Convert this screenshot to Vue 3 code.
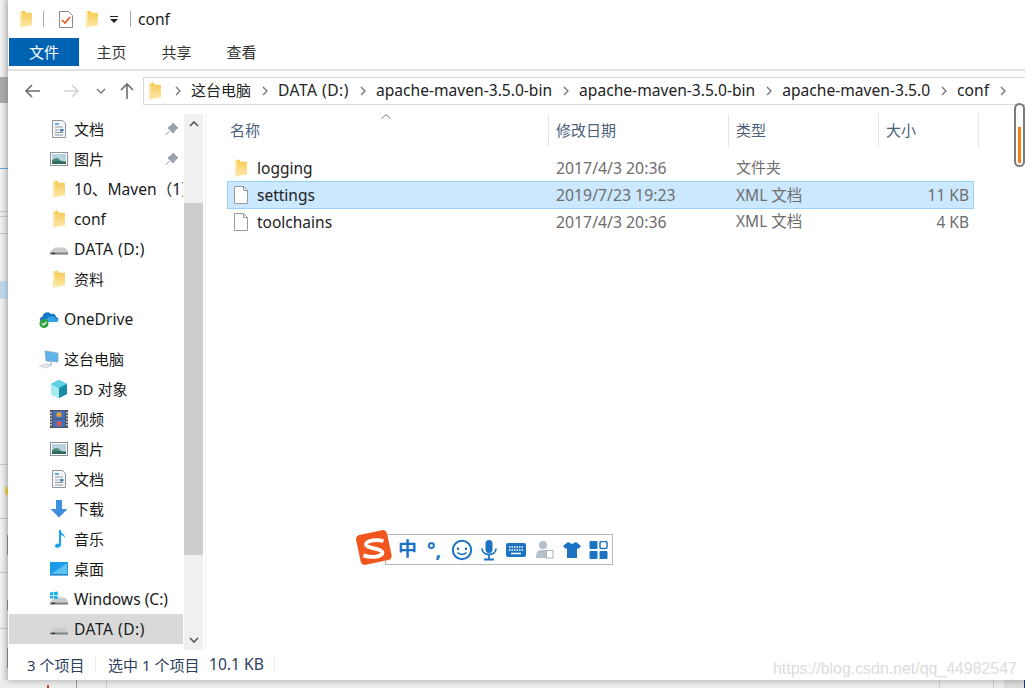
<template>
  <div class="stage">
    <div class="edge">
      <i class="mark dark" style="top:77px;height:26px"></i>
      <i class="mark blue" style="top:168px"></i>
      <i class="mark line" style="top:211px"></i>
      <i class="mark line" style="top:216px"></i>
      <i class="mark line" style="top:233px"></i>
      <i class="mark sel" style="top:281px;height:18px"></i>
      <i class="mark line" style="top:464px"></i>
      <i class="mark line" style="top:518px"></i>
      <i class="mark line" style="top:572px"></i>
      <i class="mark line" style="top:628px"></i>
      <i class="mark yellow" style="top:487px;height:8px"></i>
      <i class="mark stub" style="top:535px;height:20px"></i>
      <i class="mark stub" style="top:600px;height:10px"></i>
      <i class="mark stub" style="top:648px;height:20px"></i>
    </div>
    <div class="window">
      <div class="titlebar">
        <svg class="folder-s" viewBox="0 0 14 18"><use href="#folder" /></svg>
        <i class="tsep"></i>
        <svg class="check" width="16" height="19" viewBox="0 0 16 19">
          <path d="M1.5 1.5h9l4 4v12h-13z" fill="#fff" stroke="#8a8a8a" />
          <path d="M4 10l3 3 5-6" fill="none" stroke="#e8541e" stroke-width="1.6" />
        </svg>
        <svg class="folder-s" viewBox="0 0 14 18"><use href="#folder" /></svg>
        <svg class="drop" width="8" height="7" viewBox="0 0 8 7">
          <path d="M0 0h8v1H0zM0 3h8L4 7z" fill="#222" />
        </svg>
        <i class="tsep second"></i>
        <span class="title">conf</span>
      </div>
      <div class="tabs">
        <span class="tab file">文件</span>
        <span class="tab" v-for="t in tabs" :key="t">{{ t }}</span>
      </div>
      <div class="addrrow">
        <svg class="nav-arrow" width="18" height="16" viewBox="0 0 18 16"><path d="M16 8H2M8 2L2 8l6 6" fill="none" stroke="#6d6d6d" stroke-width="1.6" /></svg>
        <svg class="nav-arrow fwd" width="18" height="16" viewBox="0 0 18 16"><path d="M2 8h14M10 2l6 6-6 6" fill="none" stroke="#d4d4d4" stroke-width="1.6" /></svg>
        <svg class="nav-down" width="10" height="6" viewBox="0 0 10 6"><path d="M1 1l4 4 4-4" fill="none" stroke="#777" stroke-width="1.4" /></svg>
        <svg class="nav-up" width="16" height="18" viewBox="0 0 16 18"><path d="M8 17V2M2 8l6-6 6 6" fill="none" stroke="#6d6d6d" stroke-width="1.6" /></svg>
        <div class="address">
          <svg class="folder-s addr-folder" viewBox="0 0 14 18"><use href="#folder" /></svg>
          <template v-for="c in crumbs" :key="c.id">
            <svg class="chev" width="6" height="10" viewBox="0 0 6 10"><path d="M1 1l4 4-4 4" fill="none" stroke="#777" stroke-width="1.4" /></svg>
            <span class="crumb" :class="c.cls">{{ c.label }}</span>
          </template>
          <svg class="chev" width="6" height="10" viewBox="0 0 6 10"><path d="M1 1l4 4-4 4" fill="none" stroke="#777" stroke-width="1.4" /></svg>
        </div>
      </div>
      <div class="body">
        <div class="nav">
          <div class="navlist">
            <div
              v-for="n in navItems"
              :key="n.label + n.icon + n.top"
              class="navitem"
              :class="{ top: n.lvl, selected: n.selected, gap: n.gap }"
            >
              <svg class="navicon" viewBox="0 0 20 20">
                <use :href="'#' + n.icon" />
              </svg>
              <span class="navlabel" :class="n.cls">{{ n.label }}</span>
              <svg v-if="n.pin" class="pin" width="14" height="14" viewBox="0 0 14 14">
                <path d="M8 1l5 5-2 1-2 3-1 1-5-5 1-1 3-2zM4 9l-3 4" fill="#9aa3ab" stroke="#9aa3ab" stroke-width="1" />
              </svg>
            </div>
          </div>
          <div class="vscroll">
            <svg class="sarrow" width="10" height="6" viewBox="0 0 10 6"><path d="M1 5l4-4 4 4" fill="none" stroke="#555" stroke-width="1.6" /></svg>
            <div class="sthumb"></div>
            <svg class="sarrow" width="10" height="6" viewBox="0 0 10 6"><path d="M1 1l4 4 4-4" fill="none" stroke="#555" stroke-width="1.6" /></svg>
          </div>
        </div>
        <div class="files">
          <div class="head">
            <svg class="sort" width="10" height="5" viewBox="0 0 10 5"><path d="M0.5 4.5L5 0.7l4.5 3.8" fill="none" stroke="#777" /></svg>
            <div class="hcell" v-for="h in headers" :key="h">{{ h }}</div>
          </div>
          <div
            v-for="f in files"
            :key="f.name"
            class="frow"
            :class="{ on: f.selected }"
          >
            <span class="fname">
              <svg v-if="f.dir" class="ficon" viewBox="0 0 14 18"><use href="#folder" /></svg>
              <svg v-else class="ficon" viewBox="0 0 14 18">
                <path d="M.5.5h9l4 4v13H.5z" fill="#fff" stroke="#9a9a9a" />
                <path d="M9.5.5v4h4" fill="none" stroke="#9a9a9a" />
              </svg>
              {{ f.name }}
            </span>
            <span class="fmeta date">{{ f.date }}</span>
            <span class="fmeta type" :class="{ cjk: f.dir }">{{ f.type }}</span>
            <span class="fmeta size">{{ f.size }}</span>
          </div>
        </div>
      </div>
      <div class="status">
        <span class="s1">3 个项目</span>
        <i class="ssep"></i>
        <span class="s2">选中 1 个项目</span>
        <span class="s3">10.1 KB</span>
        <i class="ssep last"></i>
      </div>
    </div>
    <div class="bottom">
      <i class="red" style="left:47px"></i>
      <i class="dk" style="left:76px"></i>
      <i style="left:106px"></i>
      <i style="left:939px"></i>
      <i style="left:993px"></i>
      <b></b>
    </div>

    <div class="overscroll"><i></i></div>

    <div class="ime">
      <svg class="ime-logo" width="40" height="38" viewBox="0 0 38 36">
        <rect x="3" y="3" width="30" height="29" rx="4" transform="rotate(-12 18 18)" fill="#f0561d" />
        <path d="M27 11.5C22 9.5 11 10.5 10.5 14.5S25 18 26 22s-10 6-18 3" fill="none" stroke="#fff" stroke-width="3.6" />
      </svg>
      <span class="zh">中</span>
      <span class="punc">°,</span>
      <svg width="22" height="22" viewBox="0 0 22 22">
        <circle cx="11" cy="11" r="9.2" fill="none" stroke="#1c73c4" stroke-width="2" />
        <path d="M7 8.5v2.5M15 8.5v2.5" stroke="#1c73c4" stroke-width="2" />
        <path d="M6.5 13.5q4.500 4 9 0" fill="none" stroke="#1c73c4" stroke-width="1.6" />
      </svg>
      <svg width="18" height="22" viewBox="0 0 18 22">
        <rect x="5.5" y="1" width="7" height="13" rx="3.5" fill="#1c73c4" />
        <path d="M2 9.5c0 8 14 8 14 0M9 16v4M4 20.5h10" fill="none" stroke="#1c73c4" stroke-width="1.8" />
      </svg>
      <svg width="22" height="16" viewBox="0 0 22 16">
        <rect x="1" y="1" width="20" height="14" rx="2" fill="#1c73c4" />
        <path d="M4 5h14M4 8h14" stroke="#fff" stroke-width="1.5" stroke-dasharray="1.5 1" />
        <path d="M6 11.5h10" stroke="#fff" stroke-width="1.5" />
      </svg>
      <svg class="nudge" width="20" height="20" viewBox="0 0 20 20">
        <circle cx="8" cy="5" r="4" fill="#b4c0cc" />
        <path d="M1 18c0-8 3-8 7-8h3v8z" fill="#b4c0cc" />
        <rect x="11.5" y="10.5" width="6.5" height="7.5" fill="#fff" stroke="#a4b2c0" />
      </svg>
      <svg width="20" height="18" viewBox="0 0 20 18">
        <path d="M6 1l4 2 4-2 5 4-3 3-1-1v10H5V7L4 8 1 5z" fill="#1c73c4" />
      </svg>
      <svg width="19" height="18" viewBox="0 0 18 18">
        <rect x="0" y="0" width="8" height="8" rx="1" fill="#1c73c4" />
        <rect x="10.5" y="0.5" width="7" height="7" rx="1.5" fill="none" stroke="#1c73c4" stroke-width="1.5" />
        <rect x="0" y="10" width="8" height="8" rx="1" fill="#1c73c4" />
        <rect x="10" y="10" width="8" height="8" rx="1" fill="#1c73c4" />
      </svg>
    </div>

    <div class="watermark">https://blog.csdn.net/qq_44982547</div>

    <svg class="defs" width="0" height="0">
      <defs>
        <linearGradient id="fgrad" x1="0" y1="0" x2="0" y2="1">
          <stop offset="0" stop-color="#f6c84e" />
          <stop offset="1" stop-color="#fde9ac" />
        </linearGradient>
        <g id="folder">
          <path d="M1 1.500L6 .5V2.500L13 3V15.500L6 16.500 1 17.500z" fill="url(#fgrad)" />
          <path d="M1 1.500L3 1V17.200L1 17.500z" fill="#fce9a8" />
        </g>
        <g id="f20">
          <g transform="translate(3 1)"><use href="#folder" /></g>
        </g>
        <g id="doc">
          <path d="M3.5 1.5h10l3 3v14h-13z" fill="#f4f6f8" stroke="#8f979e" />
          <path d="M6 5h4" stroke="#2d9be0" stroke-width="1.5" />
          <path d="M6 8h8M6 11h4M6 13.5h8M6 16h8" stroke="#8f9aa6" />
          <rect x="11" y="10" width="3.5" height="2.5" fill="#4b7ea8" />
        </g>
        <g id="pic">
          <rect x="1.5" y="3.5" width="17" height="13" fill="#fff" stroke="#8e9397" />
          <rect x="3" y="5" width="14" height="10" fill="#b8d3e0" />
          <path d="M3 11q5-4 8 0t6 1v3H3z" fill="#4f8a72" />
          <path d="M3 13q7-2 14 0v2H3z" fill="#2e6a60" />
        </g>
        <g id="drive">
          <path d="M1 12.500l5-4h10l3 4v3H1z" fill="#c9cbcc" />
          <path d="M1 13.500h18v2H1z" fill="#7f8487" />
          <rect x="3" y="13.800" width="3" height="1.200" fill="#222" />
        </g>
        <g id="winc">
          <use href="#drive" />
          <path d="M1 3.500l3-.4V6H1zM4.700 3l4-.5V6h-4zM1 6.800h3v2.800l-3-.4zM4.700 6.800h4v3.300l-4-.5z" fill="#19b0ee" />
        </g>
        <g id="cloud">
          <path d="M4 13c-4 0-4-5-.5-5.500C4 4 9 1.500 12 5c3-1 5 1 5 3 3 0 3 5 0 5z" fill="#1678c8" />
          <path d="M8 13c-2 0-2-3 .5-3.500C10 7 15 7 16 9c3 0 4 4 1 4z" fill="#36a3e6" />
          <circle cx="5" cy="14.500" r="4.500" fill="#2aa33a" />
          <path d="M3 14.500l1.500 1.500 3-3" fill="none" stroke="#fff" stroke-width="1.200" />
        </g>
        <g id="pc">
          <path d="M6 2l13 2v9L7 12z" fill="#5fb3e8" stroke="#8ea6b8" stroke-width=".7" />
          <path d="M11 12.500v2.500l-5 .5v1l7 0v-3.500" fill="#c6ccd2" />
          <path d="M0 17l6-2 7 1-5 3z" fill="#e3e6e8" stroke="#b8bec4" stroke-width=".5" />
        </g>
        <g id="cube">
          <path d="M10 1l8 4v10l-8 4-8-4V5z" fill="#2fb6cf" />
          <path d="M2 5l8 4v10l-8-4z" fill="#a8ecef" />
          <path d="M10 1l8 4-8 4-8-4z" fill="#5ed2e4" />
          <path d="M10 9l8-4v10l-8 4z" fill="#1a8ba6" />
        </g>
        <g id="video">
          <rect x="1" y="1" width="18" height="18" fill="#53585e" />
          <rect x="4" y="2" width="12" height="7.500" fill="#3f6fc0" />
          <rect x="4" y="10.500" width="12" height="7.500" fill="#3f6fc0" />
          <circle cx="10" cy="5.500" r="2.600" fill="#e9a12c" />
          <circle cx="10" cy="14.500" r="2.600" fill="#d9534f" />
          <path d="M2 3v14M18 3v14" stroke="#fff" stroke-width="1.200" stroke-dasharray="1.500 1.500" />
        </g>
        <g id="down">
          <path d="M7 1h6v9h5.500L10 18.500 1.500 10H7z" fill="#3d8fdc" />
        </g>
        <g id="music">
          <path d="M10 1h2c0 4 4 4 4 8-1-2-3-3-4-3v10c0 3-6 4-6 1 0-2 3-3 4-2z" fill="#1aa0ee" />
        </g>
        <g id="desk">
          <rect x="1" y="3" width="18" height="13" fill="#1a9ce8" />
          <path d="M2 15L18 4v11z" fill="#5cc0f2" />
          <rect x="1" y="15.500" width="18" height="1" fill="#0c6fb4" />
        </g>
      </defs>
    </svg>
  </div>
</template>

<script setup>
const tabs = ['主页', '共享', '查看']
const crumbs = [
  { id: 1, label: '这台电脑', cls: 'cn' },
  { id: 2, label: 'DATA (D:)', cls: 'lat wide' },
  { id: 3, label: 'apache-maven-3.5.0-bin', cls: 'lat' },
  { id: 4, label: 'apache-maven-3.5.0-bin', cls: 'lat' },
  { id: 5, label: 'apache-maven-3.5.0', cls: 'lat' },
  { id: 6, label: 'conf', cls: 'lat' }
]
const headers = ['名称', '修改日期', '类型', '大小']

const navItems = [
  { label: '文档', icon: 'doc', pin: true },
  { label: '图片', icon: 'pic', pin: true },
  { label: '10、Maven（1）', icon: 'f20', cls: 'lat mix' },
  { label: 'conf', icon: 'f20', cls: 'lat' },
  { label: 'DATA (D:)', icon: 'drive', cls: 'lat wide' },
  { label: '资料', icon: 'f20' },
  { label: 'OneDrive', icon: 'cloud', lvl: true, gap: true, cls: 'lat' },
  { label: '这台电脑', icon: 'pc', lvl: true, gap: true },
  { label: '3D 对象', icon: 'cube' },
  { label: '视频', icon: 'video' },
  { label: '图片', icon: 'pic', top: 2 },
  { label: '文档', icon: 'doc', top: 2 },
  { label: '下载', icon: 'down' },
  { label: '音乐', icon: 'music' },
  { label: '桌面', icon: 'desk' },
  { label: 'Windows (C:)', icon: 'winc', cls: 'lat' },
  { label: 'DATA (D:)', icon: 'drive', selected: true, top: 2, cls: 'lat wide' }
]

const files = [
  { name: 'logging', date: '2017/4/3 20:36', type: '文件夹', size: '', dir: true },
  { name: 'settings', date: '2019/7/23 19:23', type: 'XML 文档', size: '11 KB', selected: true },
  { name: 'toolchains', date: '2017/4/3 20:36', type: 'XML 文档', size: '4 KB' }
]
</script>

<style>
html, body { margin: 0; background: #f0f0f0; }
</style>

<style scoped>
.stage {
  position: relative;
  width: 1025px;
  height: 688px;
  overflow: hidden;
  background: #efefef;
  font-family: "Noto Sans", "Noto Sans CJK SC", sans-serif;
  font-size: 15px;
  color: #1a1a1a;
}
.lat { font-size: 15.6px; }
.wide { letter-spacing: 0.5px; }
.edge {
  position: absolute;
  left: 0;
  top: 0;
  width: 8px;
  height: 680px;
  background: linear-gradient(to right, #f4f4f4, #d6d6d6);
}
.mark { position: absolute; left: 0; width: 8px; display: block; height: 1px; }
.mark.dark { background: #a8a8a8; }
.mark.blue { background: #64a8e0; }
.mark.line { background: #c4c4c4; }
.mark.sel { background: #bcd6ec; }
.mark.yellow { left: 5px; width: 3px; background: #e8c84c; }
.mark.stub { left: 7px; width: 1px; background: #8c8c8c; }

.window {
  position: absolute;
  z-index: 1;
  left: 8px;
  top: 0;
  width: 1017px;
  height: 680px;
  background: #fff;
  box-shadow: 0 1px 6px rgba(0, 0, 0, 0.25);
  display: flex;
  flex-direction: column;
}
.titlebar {
  height: 38px;
  display: flex;
  align-items: center;
  padding-left: 11px;
  box-sizing: border-box;
}
.folder-s { width: 14px; height: 18px; flex: none; }
.tsep { width: 1px; height: 16px; background: #a8a8a8; margin: 0 14px 0 10px; }
.check { margin-right: 11px; }
.drop { margin-left: 11px; }
.tsep.second { margin: 0 7px 0 12px; }
.title { font-size: 15.6px; }

.tabs {
  height: 28px;
  display: flex;
  margin-left: 1px;
}
.tab {
  width: 65px;
  text-align: center;
  line-height: 28px;
  color: #333;
}
.tab.file {
  width: 70px;
  background: #0063b1;
  color: #fff;
}
.addrrow {
  height: 45px;
  margin-top: 3px;
  border-top: 2px solid #e2e2e2;
  display: flex;
  align-items: center;
  box-sizing: border-box;
  padding-bottom: 4px;
}
.nav-arrow { margin-left: 16px; flex: none; }
.nav-arrow.fwd { margin-left: 20px; }
.nav-down { margin-left: 16px; flex: none; }
.nav-up { margin-left: 13px; flex: none; }
.address {
  margin-left: 8px;
  flex: 1;
  height: 28px;
  border: 1px solid #d9d9d9;
  border-right: none;
  display: flex;
  align-items: center;
  padding-left: 4px;
  box-sizing: border-box;
}
.chev { margin: 0 10px 0 11px; flex: none; }
.addr-folder { margin-right: 2px; }
.crumb { white-space: nowrap; color: #222; line-height: 1; }
.crumb.cn { margin-bottom: 1px; }

.body { flex: 1; display: flex; min-height: 0; }
.nav {
  width: 197px;
  flex: none;
  display: flex;
  border-right: 1px solid #f0f0f0;
  overflow: hidden;
}
.navlist { width: 175px; flex: none; margin-left: 1px; }
.navitem {
  height: 30px;
  width: 174px;
  box-sizing: border-box;
  display: flex;
  align-items: center;
  padding-left: 40px;
  position: relative;
  white-space: nowrap;
  overflow: hidden;
}
.navitem.top { padding-left: 30px; }
.navitem.gap { margin-top: 10px; }
.navitem.selected { background: #d9d9d9; }
.navicon { width: 20px; height: 20px; flex: none; margin-right: 5px; }
.navlabel { margin-bottom: 2px; }
.navlabel.lat { margin-bottom: 0; }
.navlabel.mix { margin-bottom: 2px; }
.pin { position: absolute; left: 156px; top: 8px; }
.vscroll {
  width: 19px;
  background: #f0f0f0;
  display: flex;
  flex-direction: column;
  align-items: center;
  justify-content: space-between;
  padding-top: 7px;
  padding-bottom: 7px;
  box-sizing: border-box;
}
.sthumb { width: 19px; height: 352px; background: #cdcdcd; margin-top: 76px; margin-bottom: auto; }

.files { flex: 1; padding-left: 19px; min-width: 0; }
.head {
  position: relative;
  display: grid;
  grid-template-columns: 324px 180px 150px 100px;
  align-items: start;
  height: 40px;
}
.sort { position: absolute; left: 156px; top: 0; }
.hcell {
  height: 33px;
  box-sizing: border-box;
  padding: 5px 0 0 7px;
  border-right: 1px solid #e5e5e5;
  color: #4c607a;
}
.hcell:first-of-type { padding-left: 5px; }
.frow {
  display: grid;
  grid-template-columns: 321px 180px 142px 104px;
  height: 27px;
  align-items: center;
  box-sizing: border-box;
  width: 747px;
  margin-left: 2px;
}
.frow:last-child { padding-bottom: 2px; }
.frow.on {
  height: 28px;
  background: #cce8ff;
  outline: 1px solid #99d1ff;
  outline-offset: -1px;
}
.fname { display: flex; align-items: center; gap: 9px; padding-left: 7px; color: #222; font-size: 15.5px; }
.ficon { width: 14px; height: 18px; flex: none; }
.fmeta { color: #6d6d6d; padding-left: 8px; white-space: nowrap; font-size: 15.5px; }
.fmeta.date { font-size: 15.8px; }
.fmeta.type { margin-bottom: 2px; }
.fmeta.cjk { font-size: 15px; }
.size { text-align: right; padding-right: 5px; }

.status {
  height: 30px;
  display: flex;
  align-items: center;
  padding-left: 19px;
  padding-bottom: 2px;
  box-sizing: border-box;
  color: #2c4060;
  flex: none;
}
.s1 { width: 68px; white-space: nowrap; }
.ssep { width: 1px; height: 16px; background: #eeeeee; margin-right: 12px; }
.s2 { white-space: nowrap; width: 101px; }
.s3 { white-space: nowrap; width: 65px; font-size: 15.6px; }

.bottom {
  position: absolute;
  left: 0;
  top: 680px;
  width: 1025px;
  height: 8px;
  background: #ececec;
}
.bottom i { position: absolute; top: 0; width: 1px; height: 8px; background: #cfcfcf; }
.bottom i.dk { background: #9a9a9a; }
.bottom i.red { width: 2px; top: 5px; height: 3px; background: #c83c3c; }
.bottom b { position: absolute; left: 1004px; top: 0; width: 20px; height: 8px; background: #dcdcdc; border-right: 1px solid #1c3c78; }

.overscroll {
  position: absolute;
  z-index: 2;
  left: 1014px;
  top: 103px;
  width: 11px;
  height: 64px;
  border: 2px solid #7a7a7a;
  border-radius: 6px;
  box-sizing: border-box;
  background: #fff;
}
.overscroll i {
  position: absolute;
  left: 2px;
  top: 22px;
  width: 3px;
  height: 36px;
  background: #f47d16;
  display: block;
}

.ime {
  position: absolute;
  z-index: 2;
  left: 385px;
  top: 534px;
  width: 228px;
  height: 31px;
  box-sizing: border-box;
  border: 1px solid #b4b8bc;
  background: #fff;
  display: flex;
  align-items: center;
  gap: 7px;
  padding-left: 12px;
  color: #1c73c4;
}
.ime-logo { position: absolute; left: -31px; top: -6px; }
.nudge { margin-left: 1px; }
.zh { font-weight: 700; font-size: 19px; line-height: 1; }
.punc { font-weight: 700; font-size: 20px; line-height: 1; width: 20px; text-align: center; }

.watermark {
  position: absolute;
  z-index: 2;
  left: 773px;
  top: 660px;
  font-family: "Liberation Sans", sans-serif;
  font-size: 15.9px;
  color: #dcdcdc;
  white-space: nowrap;
}
.defs { position: absolute; }
</style>
